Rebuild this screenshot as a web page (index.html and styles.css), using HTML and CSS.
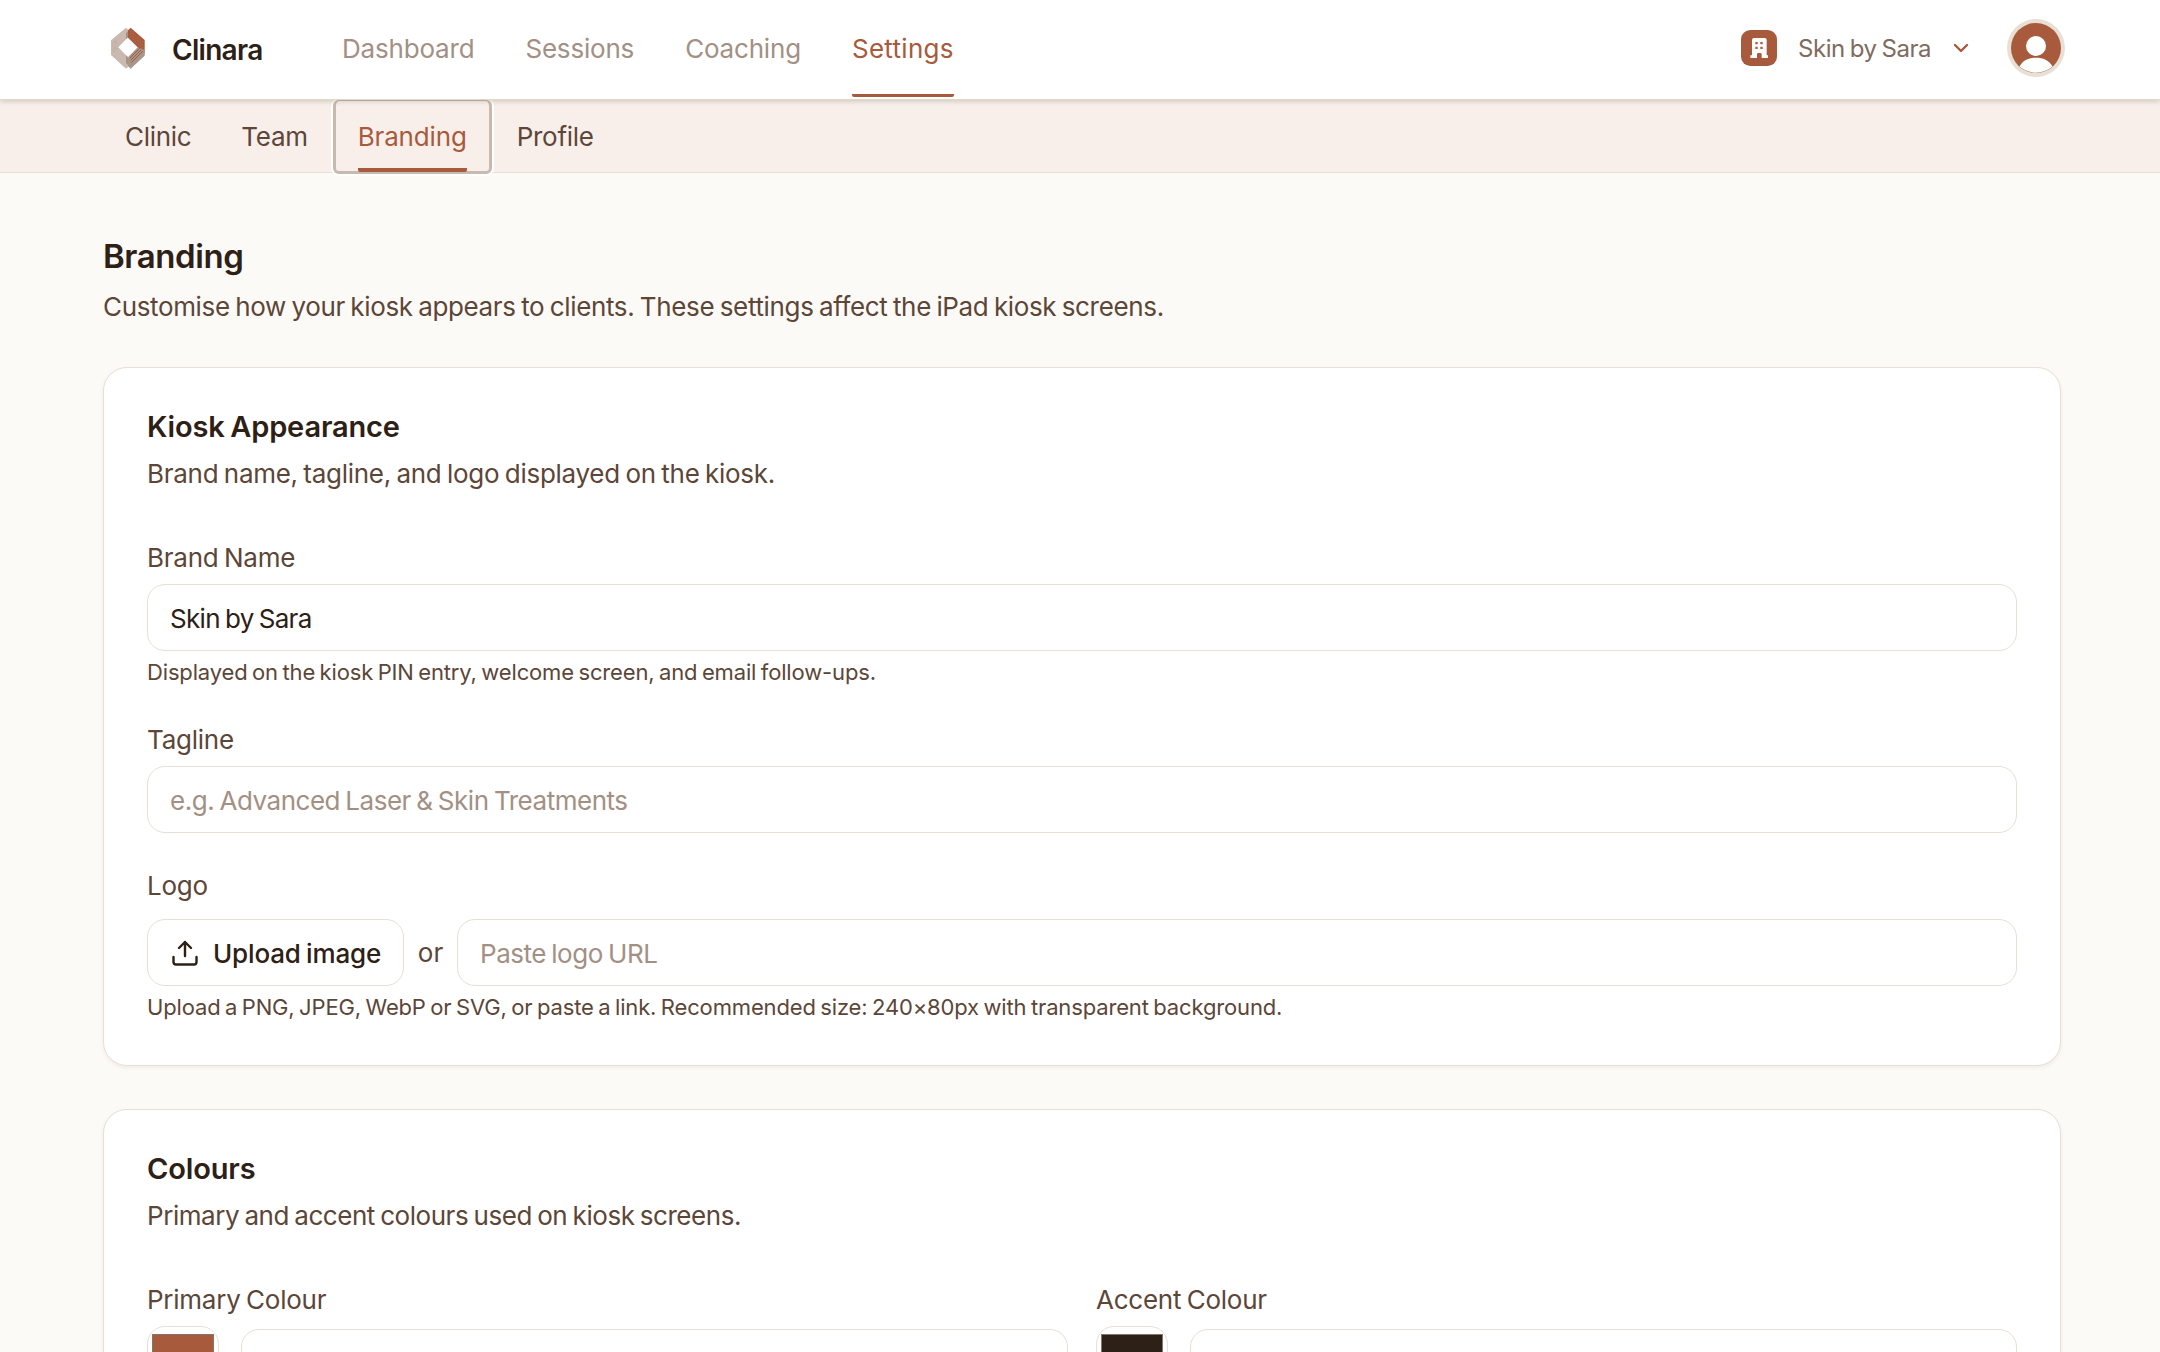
FILE: index.html
```html
<!DOCTYPE html>
<html lang="en">
<head>
    <meta charset="UTF-8">
    <meta name="viewport" content="width=device-width, initial-scale=1.0">
    <title>Branding - Clinara</title>
    <link rel="stylesheet" href="styles.css">
</head>
<body>
    <header class="header">
        <a href="#" class="brand">
            <svg class="brand-logo" viewBox="90 82 108 129">
                <path fill="#c9b9af" d="M138 84 L148 93 L144 113 L115 143 L144 173 L148 198 L138 207 L93 166 V122 Z"/>
                <path fill="#a89286" d="M138 100 L144 94 V113 L138 119 Z M138 167 L144 173 V196 L138 190 Z"/>
                <path fill="#a85a3c" d="M152 84 L194 121 V163 L173 143 L144 114 V92 Z"/>
                <path fill="#a8968a" d="M173 143 L194 151 V168 L152 207 L144 199 V173 Z"/>
                <path stroke="#a85a3c" stroke-width="3" fill="none" d="M184 150 L152 182 M189 154 L154 189 M179 146 L150 175"/>
                <path stroke="#c98c72" stroke-width="2.5" stroke-dasharray="2 5" fill="none" d="M150 93 L190 128 M150 102 L190 137 M150 111 L190 146"/>
                <path stroke="#a08676" stroke-width="2.5" stroke-dasharray="2 4" fill="none" d="M98 132 L110 121 M98 141 L112 127 M98 150 L112 137 M102 156 L112 146"/>
            </svg>
            <span class="brand-name">Clinara</span>
        </a>
        <nav class="main-nav">
            <a href="#">Dashboard</a>
            <a href="#">Sessions</a>
            <a href="#">Coaching</a>
            <a href="#" class="active">Settings</a>
        </nav>
        <div class="account">
            <svg class="clinic-badge" viewBox="0 0 108 108">
                <rect width="108" height="108" rx="28" fill="#a85a3c"/>
                <path fill="#fff" d="M33 30 q0 -6 6 -6 H71 q6 0 6 6 V76 H81 V84 H62 V73 q0 -4 -4 -4 H52 q-4 0 -4 4 V84 H28 V76 H33 Z"/>
                <path fill="#a85a3c" d="M43 36 h7 v7 h-7 Z M58 36 h7 v7 h-7 Z M43 50 h7 v7 h-7 Z M58 50 h7 v7 h-7 Z"/>
            </svg>
            <span class="clinic-name">Skin by Sara</span>
            <svg class="chevron" viewBox="0 0 16 10"><path d="M2 2 L8 8 L14 2"/></svg>
            <svg class="avatar" viewBox="0 0 58 58">
                <circle cx="29" cy="29" r="29" fill="#e8dfd5"/>
                <circle cx="29" cy="29" r="25" fill="#a85a3c"/>
                <circle cx="29" cy="27" r="10" fill="#fff"/>
                <path fill="#fff" d="M12.5 47.5 C16 41 22 38.7 29 38.7 C36 38.7 42 41 45.500 47.500 A25 25 0 0 1 12.500 47.500 Z"/>
            </svg>
        </div>
    </header>

    <nav class="sub-nav">
        <a href="#"><span>Clinic</span></a>
        <a href="#"><span>Team</span></a>
        <a href="#" class="active"><span>Branding</span></a>
        <a href="#"><span>Profile</span></a>
    </nav>

    <main class="container">
        <h1>Branding</h1>
        <p class="description">Customise how your kiosk appears to clients. These settings affect the iPad kiosk screens.</p>

        <section class="card">
            <h2>Kiosk Appearance</h2>
            <p class="card-text">Brand name, tagline, and logo displayed on the kiosk.</p>

            <div class="field">
                <label for="brandName">Brand Name</label>
                <input type="text" id="brandName" value="Skin by Sara">
                <p class="help">Displayed on the kiosk PIN entry, welcome screen, and email follow-ups.</p>
            </div>

            <div class="field">
                <label for="tagline">Tagline</label>
                <input type="text" id="tagline" placeholder="e.g. Advanced Laser &amp; Skin Treatments">
            </div>

            <div class="field">
                <label for="logoUrl">Logo</label>
                <div class="logo-row">
                    <button type="button" class="upload-button">
                        <svg viewBox="0 0 26 26"><path d="M13 16 V2 M7 8 L13 2 L19 8 M1.500 17 V22 Q1.500 24.500 4 24.500 H22 Q24.500 24.500 24.500 22 V17"/></svg>
                        Upload image
                    </button>
                    <span class="or">or</span>
                    <input type="text" id="logoUrl" placeholder="Paste logo URL">
                </div>
                <p class="help">Upload a PNG, JPEG, WebP or SVG, or paste a link. Recommended size: 240×80px with transparent background.</p>
            </div>
        </section>

        <section class="card colours">
            <h2>Colours</h2>
            <p class="card-text">Primary and accent colours used on kiosk screens.</p>
            <div class="colour-grid">
                <div class="field">
                    <label for="primaryColour">Primary Colour</label>
                    <div class="colour-row">
                        <div class="swatch"><div class="swatch-fill primary"></div></div>
                        <input type="text" id="primaryColour">
                    </div>
                </div>
                <div class="field">
                    <label for="accentColour">Accent Colour</label>
                    <div class="colour-row">
                        <div class="swatch"><div class="swatch-fill accent"></div></div>
                        <input type="text" id="accentColour">
                    </div>
                </div>
            </div>
        </section>
    </main>
</body>
</html>
```
FILE: styles.css
```css
* {
    box-sizing: border-box;
}
body {
    font-family: Inter, sans-serif;
    font-size: 26px;
    background-color: #fcfaf6;
    color: #5c4638;
    margin: 0;
    height: 1352px;
    overflow: hidden;
    word-spacing: -1.5px;
}
h1, h2, p {
    margin: 0;
}
a {
    text-decoration: none;
}
.header {
    position: relative;
    z-index: 2;
    display: flex;
    height: 100px;
    padding: 0 95px 0 110px;
    background-color: #fff;
    border-bottom: 1px solid #e0d8cd;
    box-shadow: 0 2px 4px rgba(80, 60, 30, 0.18);
}
.brand {
    display: flex;
    align-items: center;
    height: 97px;
    width: 232px;
    gap: 26px;
}
.brand-logo {
    width: 36px;
    height: 43px;
}
.brand-name {
    padding-top: 2px;
    font-size: 28px;
    font-weight: 600;
    letter-spacing: -0.7px;
    color: #2d2016;
}
.main-nav {
    display: flex;
    gap: 51px;
}
.main-nav a {
    height: 97px;
    line-height: 91px;
    border-top: 3px solid transparent;
    border-bottom: 3px solid transparent;
    letter-spacing: -0.19px;
    color: #a39084;
}
.main-nav a.active {
    color: #a85a3c;
    border-bottom-color: #a85a3c;
    border-radius: 2px;
    letter-spacing: 0.3px;
}
.account {
    display: flex;
    align-items: center;
    height: 96px;
    margin-left: auto;
}
.clinic-badge {
    width: 36px;
    height: 36px;
    margin-right: 21px;
}
.clinic-name {
    font-size: 24px;
    letter-spacing: -0.42px;
    width: 155px;
    color: #806b5f;
}
.chevron {
    width: 16px;
    height: 10px;
    margin-right: 38px;
    fill: none;
    stroke: #a85a3c;
    stroke-width: 2.4;
    stroke-linecap: round;
    stroke-linejoin: round;
}
.avatar {
    width: 58px;
    height: 58px;
}
.sub-nav {
    display: flex;
    height: 73px;
    padding-left: 100px;
    background-color: #f8efea;
    border-bottom: 1px solid #e8dfd5;
}
.sub-nav a {
    height: 74px;
    padding: 0 22px;
    border: 3px solid transparent;
    border-top-width: 0;
    letter-spacing: -0.3px;
    color: #5c4638;
}
.sub-nav span {
    display: block;
    height: 72px;
    line-height: 73px;
}
.sub-nav a.active {
    color: #a85a3c;
    letter-spacing: -0.15px;
    border: 3px solid #c9b9af;
    border-top-width: 1px;
    border-radius: 6px;
    box-shadow: 0 0 0 2px #fff;
}
.sub-nav a.active span {
    height: 71px;
    line-height: 71px;
    border-bottom: 4px solid #a85a3c;
    border-radius: 2px;
}
.container {
    padding: 61px 99px 0 103px;
}
h1 {
    font-size: 33px;
    line-height: 44px;
    font-weight: 600;
    letter-spacing: -0.4px;
    color: #2d2016;
}
.description {
    margin: 10px 0 41px;
    line-height: 38px;
    letter-spacing: -0.35px;
}
.card {
    margin-bottom: 43px;
    padding: 39px 43px 43px;
    background-color: #fff;
    border: 1px solid #e8dfd5;
    border-radius: 24px;
    box-shadow: 0 2px 4px rgba(60, 40, 20, 0.06);
}
h2 {
    font-size: 29px;
    line-height: 40px;
    font-weight: 600;
    letter-spacing: -0.15px;
    color: #2d2016;
}
.card-text {
    margin: 9px 0 48px;
    line-height: 36px;
    letter-spacing: -0.28px;
}
.colours .card-text {
    letter-spacing: -0.46px;
}
.field + .field {
    margin-top: 35px;
}
label {
    display: block;
    margin-bottom: 8px;
    line-height: 36px;
    letter-spacing: -0.25px;
}
input {
    display: block;
    width: 100%;
    height: 67px;
    padding: 1px 22px 0;
    font: inherit;
    letter-spacing: -0.48px;
    word-spacing: -1.5px;
    color: #2d2016;
    background-color: #fff;
    border: 1px solid #e8dfd5;
    border-radius: 18px;
}
#brandName {
    letter-spacing: -0.7px;
}
input::placeholder {
    color: #a39084;
}
.help {
    margin-top: 6px;
    font-size: 22px;
    line-height: 30px;
    letter-spacing: -0.15px;
}
.logo-row {
    display: flex;
    align-items: center;
    margin-top: 15px;
}
.upload-button {
    display: flex;
    align-items: center;
    flex: none;
    width: 257px;
    height: 67px;
    gap: 15px;
    padding: 1px 0 0 24px;
    font: inherit;
    font-weight: 500;
    letter-spacing: -0.15px;
    word-spacing: -1.5px;
    color: #2d2016;
    background-color: #fff;
    border: 1px solid #e8dfd5;
    border-radius: 18px;
}
.upload-button svg {
    width: 26px;
    height: 26px;
    fill: none;
    stroke: #2d2016;
    stroke-width: 2.4;
    stroke-linecap: round;
    stroke-linejoin: round;
}
.or {
    flex: none;
    width: 53px;
    text-align: center;
}
.colour-grid {
    display: grid;
    grid-template-columns: 1fr 1fr;
    gap: 28px;
}
.colour-grid .field {
    margin-top: 0;
}
.colour-row {
    display: flex;
    align-items: center;
    gap: 22px;
}
.swatch {
    flex: none;
    width: 72px;
    height: 73px;
    padding: 7px 4px;
    border: 1px solid #e8dfd5;
    border-radius: 18px;
}
.swatch-fill {
    height: 57px;
    border: 1px solid #857568;
}
.primary {
    background-color: #a85a3c;
}
.accent {
    background-color: #2d2016;
}
```
